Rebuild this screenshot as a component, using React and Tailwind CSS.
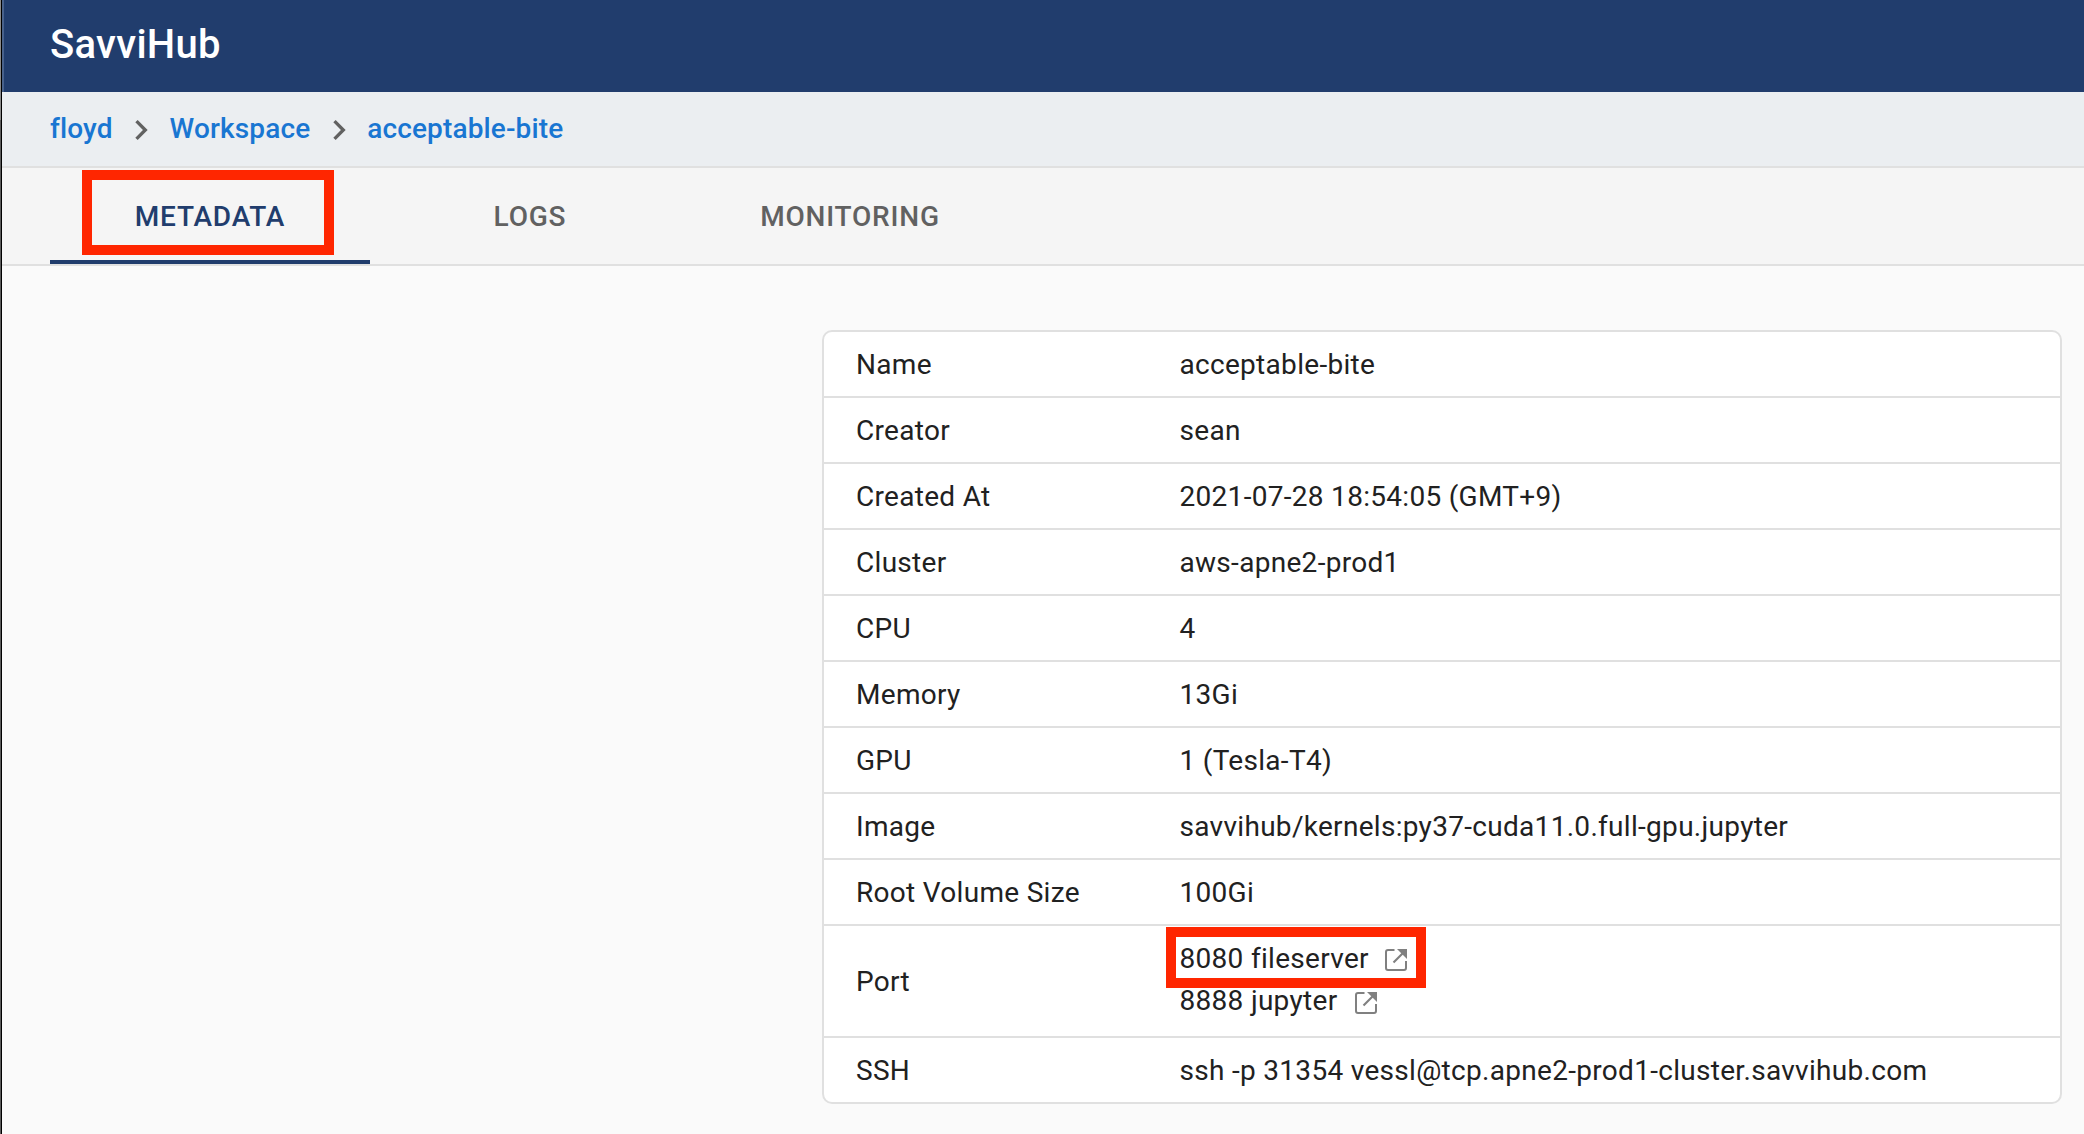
const rows = [
  ["Name", "acceptable-bite"],
  ["Creator", "sean"],
  ["Created At", "2021-07-28 18:54:05 (GMT+9)"],
  ["Cluster", "aws-apne2-prod1"],
  ["CPU", "4"],
  ["Memory", "13Gi"],
  ["GPU", "1 (Tesla-T4)"],
  ["Image", "savvihub/kernels:py37-cuda11.0.full-gpu.jupyter"],
  ["Root Volume Size", "100Gi"],
];

function Chevron() {
  return (
    <svg className="mt-0.5 mr-[8.2px] ml-[8.7px] h-10 w-10 shrink-0" viewBox="0 0 24 24" fill="#616161">
      <path d="M10 6L8.59 7.41 13.17 12l-4.58 4.59L10 18l6-6z" />
    </svg>
  );
}

function OpenIcon({ className }) {
  return (
    <svg className={`h-[22px] w-[22px] shrink-0 ${className}`} viewBox="0 0 22 22" fill="none" stroke="#808080" strokeWidth="2">
      <path d="M9.5 1H3Q1 1 1 3V19Q1 21 3 21H19Q21 21 21 19V12" />
      <path d="M8.5 13.5L18 4" strokeWidth="2.2" />
      <path d="M12 0H22V10Z" fill="#808080" stroke="none" />
    </svg>
  );
}

function Row({ label, children, last, tall }) {
  return (
    <div className={`flex items-center pt-0.5 ${tall ? "h-[112px]" : last ? "h-16" : "h-[66px]"} ${last ? "" : "border-b-2 border-[#e0e0e0]"}`}>
      <div className="w-[355.5px] shrink-0 pl-8">{label}</div>
      <div>{children}</div>
    </div>
  );
}

export default function App() {
  return (
    <div className="flex h-[1134px] w-[2084px] overflow-hidden bg-[#fafafa] font-['Roboto',sans-serif] text-[28px] leading-10 text-[#212121]">
      <div className="flex w-px shrink-0 flex-col bg-[#5c5c5c]">
        <div className="h-[120px] bg-[#8c8c8c]" />
      </div>
      <div className="w-px shrink-0 bg-black" />
      <div className="flex min-w-0 grow flex-col">
        <header className="flex h-[92px] items-center border-l-2 border-[#48628c] bg-[#213d6d] pb-0.5 pl-[46px] text-[40px] font-medium tracking-[0.0075em] text-white">
          SavviHub
        </header>
        <nav className="flex h-[76px] items-center border-b-2 border-[#e0e0e0] bg-[#ebeef1] pl-12 font-medium tracking-[0.005em] text-[#1976d2]">
          <span>floyd</span>
          <Chevron />
          <span>Workspace</span>
          <Chevron />
          <span>acceptable-bite</span>
        </nav>
        <div className="flex h-[98px] border-b-2 border-[#e0e0e0] bg-[#f5f5f5] pl-12 font-medium tracking-[0.02857em] text-[#616161]">
          <div className="relative flex w-80 items-center justify-center border-b-4 border-[#213d6d] pt-1.5 text-[#213d6d]">
            METADATA
            <div className="absolute top-0.5 left-8 h-[85px] w-[252px] border-[10px] border-[#ff2600]" />
          </div>
          <div className="flex w-80 items-center justify-center pt-0.5">LOGS</div>
          <div className="flex w-80 items-center justify-center pt-0.5">MONITORING</div>
        </div>
        <main className="mt-16 ml-[820px] w-[1240px] rounded-[10px] border-2 border-[#e0e0e0] bg-white tracking-[0.01071em]">
          {rows.map(([label, value]) => (
            <Row key={label} label={label}>{value}</Row>
          ))}
          <Row label="Port" tall>
            <div className="pb-1">
              <div className="relative flex h-[42px] items-center">
                8080 fileserver
                <OpenIcon className="mt-0.5 ml-[16.5px]" />
                <div className="absolute -top-[11px] -left-[13.5px] h-[61px] w-[260px] border-[10px] border-[#ff2600]" />
              </div>
              <div className="flex h-[42px] items-center">
                8888 jupyter
                <OpenIcon className="mt-1 ml-[17.5px]" />
              </div>
            </div>
          </Row>
          <Row label="SSH" last>ssh -p 31354 vessl@tcp.apne2-prod1-cluster.savvihub.com</Row>
        </main>
      </div>
    </div>
  );
}
